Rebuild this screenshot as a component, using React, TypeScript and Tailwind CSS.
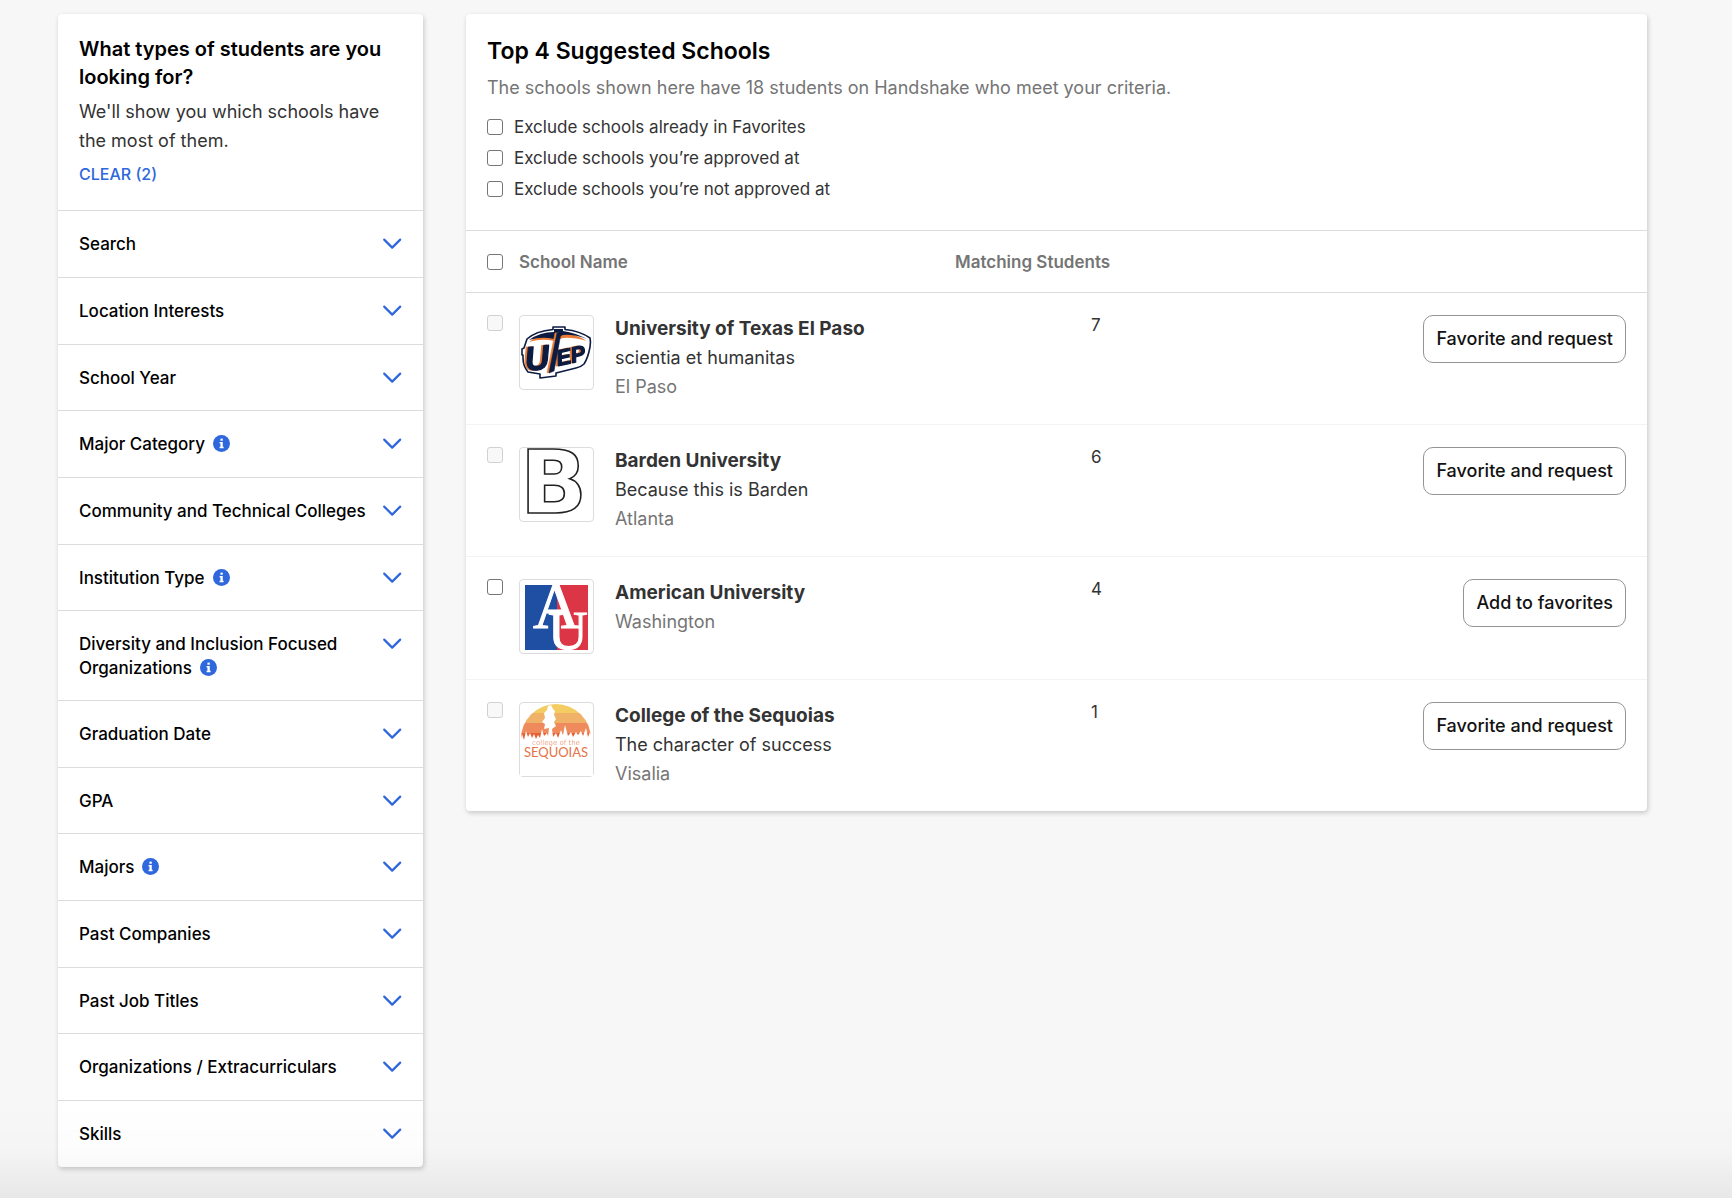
import { useState, type ReactNode } from 'react'

type Filter = { label: string; info?: boolean }

type School = {
  id: string
  name: string
  tagline?: string
  city: string
  matching: number
  action: string
  selectable: boolean
  logo: ReactNode
}

const FILTERS: Filter[] = [
  { label: 'Search' },
  { label: 'Location Interests' },
  { label: 'School Year' },
  { label: 'Major Category', info: true },
  { label: 'Community and Technical Colleges' },
  { label: 'Institution Type', info: true },
  { label: 'Diversity and Inclusion Focused Organizations', info: true },
  { label: 'Graduation Date' },
  { label: 'GPA' },
  { label: 'Majors', info: true },
  { label: 'Past Companies' },
  { label: 'Past Job Titles' },
  { label: 'Organizations / Extracurriculars' },
  { label: 'Skills' },
]

const EXCLUSIONS = [
  { id: 'exclude-favorites', label: 'Exclude schools already in Favorites' },
  { id: 'exclude-approved', label: 'Exclude schools you’re approved at' },
  { id: 'exclude-not-approved', label: 'Exclude schools you’re not approved at' },
]

const SCHOOLS: School[] = [
  {
    id: 'utep',
    name: 'University of Texas El Paso',
    tagline: 'scientia et humanitas',
    city: 'El Paso',
    matching: 7,
    action: 'Favorite and request',
    selectable: false,
    logo: <UtepLogo />,
  },
  {
    id: 'barden',
    name: 'Barden University',
    tagline: 'Because this is Barden',
    city: 'Atlanta',
    matching: 6,
    action: 'Favorite and request',
    selectable: false,
    logo: <BardenLogo />,
  },
  {
    id: 'american',
    name: 'American University',
    city: 'Washington',
    matching: 4,
    action: 'Add to favorites',
    selectable: true,
    logo: <AmericanLogo />,
  },
  {
    id: 'sequoias',
    name: 'College of the Sequoias',
    tagline: 'The character of success',
    city: 'Visalia',
    matching: 1,
    action: 'Favorite and request',
    selectable: false,
    logo: <SequoiasLogo />,
  },
]

const CHECKBOX =
  'block size-4 shrink-0 appearance-none rounded-[3px] border border-[#767676] bg-white checked:border-[#2f67dc] checked:bg-[#2f67dc] disabled:border-[#d1d1d1] disabled:bg-[#f8f8f8]'

const CARD = 'rounded-[4px] bg-white shadow-[1px_2px_5px_rgba(0,0,0,0.2)]'

export default function App() {
  return (
    <div className="min-h-screen bg-[#f7f7f7] font-['Inter','Liberation_Sans',sans-serif] text-[#333]">
      <div className="flex items-start gap-[43px] pt-[14px] pr-[85px] pb-[31px] pl-[58px]">
        <FilterSidebar />
        <SuggestedSchools />
      </div>
      {/* soft shade along the bottom edge of the window */}
      <div className="pointer-events-none fixed inset-x-0 bottom-0 h-24 bg-linear-to-b from-transparent via-black/1 to-black/6" />
    </div>
  )
}

function FilterSidebar() {
  return (
    <aside className={`w-[365px] shrink-0 ${CARD}`}>
      <div className="px-[21px] pt-[21px] pb-6">
        <h2 className="text-[20px] leading-7 font-semibold text-black">
          What types of students are you looking for?
        </h2>
        <p className="mt-[6px] text-[18px] leading-[29px]">
          We'll show you which schools have the most of them.
        </p>
        <button type="button" className="mt-2 block text-[16px] leading-[23px] font-medium text-[#2f67dc]">
          CLEAR (2)
        </button>
      </div>
      <ul>
        {FILTERS.map((f) => (
          <FilterRow key={f.label} filter={f} />
        ))}
      </ul>
    </aside>
  )
}

function FilterRow({ filter }: { filter: Filter }) {
  const [open, setOpen] = useState(false)
  return (
    <li className="min-h-[67px] border-t border-[#dcdcdc] nth-[3n]:min-h-[66px]">
      <button
        type="button"
        aria-expanded={open}
        onClick={() => setOpen(!open)}
        className="flex w-full items-start justify-between px-[21px] pt-[21px] pb-5 text-left text-[17px] leading-6 font-medium text-black"
      >
        <span>
          {filter.label}
          {filter.info && <InfoIcon />}
        </span>
        <svg viewBox="0 0 20 12" className="mt-[6px] h-3 w-5 shrink-0" aria-hidden="true">
          <path
            d="M2.2 1.6 10.2 9.6 18.2 1.6"
            fill="none"
            stroke="#2f67dc"
            strokeWidth="2.2"
            strokeLinecap="round"
            strokeLinejoin="round"
          />
        </svg>
      </button>
    </li>
  )
}

function InfoIcon() {
  return (
    <svg viewBox="0 0 16 16" className="ml-2 inline-block size-[17px] align-[-2px]" aria-hidden="true">
      <circle cx="8" cy="8" r="8" fill="#2f67dc" />
      <rect x="7" y="3.4" width="2.2" height="2" fill="#fff" />
      <path d="M6.2 6.6H9.2V11H10V12.4H6.2V11H7V8H6.2Z" fill="#fff" />
    </svg>
  )
}

function SuggestedSchools() {
  return (
    <main className={`min-w-0 flex-1 ${CARD}`}>
      <header className="px-[21px] pt-5 pb-[26px]">
        <h1 className="text-[23px] leading-[34px] font-semibold text-black">Top 4 Suggested Schools</h1>
        <p className="mt-[5px] text-[18px] leading-[29px] text-[#757575]">
          The schools shown here have 18 students on Handshake who meet your criteria.
        </p>
        <div className="mt-[9px] flex flex-col">
          {EXCLUSIONS.map((e) => (
            <div key={e.id} className="flex h-[31px] items-center gap-[11px]">
              <input type="checkbox" id={e.id} className={CHECKBOX} />
              <label htmlFor={e.id} className="text-[17px] leading-6">
                {e.label}
              </label>
            </div>
          ))}
        </div>
      </header>

      <table className="w-full table-fixed border-collapse text-left">
        <colgroup>
          <col className="w-[53px]" />
          <col className="w-[436px]" />
          <col className="w-[220px]" />
          <col />
        </colgroup>
        <thead>
          <tr className="h-[62px] border-y border-[#dcdcdc] text-[17px] leading-6 text-[#757575]">
            <th className="pl-[21px]">
              <input type="checkbox" aria-label="Select all schools" className={CHECKBOX} />
            </th>
            <th className="font-semibold">School Name</th>
            <th className="font-semibold">Matching Students</th>
            <td />
          </tr>
        </thead>
        <tbody>
          {SCHOOLS.map((s) => (
            <SchoolRow key={s.id} school={s} />
          ))}
        </tbody>
      </table>
    </main>
  )
}

function SchoolRow({ school }: { school: School }) {
  return (
    <tr className="border-b border-[#f3f3f3] align-top last:border-b-0">
      <td className="pt-[22px] pb-[23px] pl-[21px]">
        <input
          type="checkbox"
          aria-label={`Select ${school.name}`}
          disabled={!school.selectable}
          className={CHECKBOX}
        />
      </td>
      <td className="pt-[22px] pb-[23px]">
        <div className="flex gap-[21px]">
          <div className="mb-[2px] size-[75px] shrink-0 rounded-[4px] border border-[#dcdcdc]">
            {school.logo}
          </div>
          <div className="text-[18px] leading-[29px]">
            <div className="text-[19px] leading-7 font-bold">{school.name}</div>
            {school.tagline && <div>{school.tagline}</div>}
            <div className="text-[#757575]">{school.city}</div>
          </div>
        </div>
      </td>
      <td className="pt-[22px] pb-[23px] pl-[136px] text-[17px] leading-5">{school.matching}</td>
      <td className="pt-[22px] pr-[21px] pb-[23px] text-right">
        <button
          type="button"
          className="h-12 rounded-[10px] border border-[#949494] bg-white px-3 text-[18px] leading-6 font-medium text-[#121212]"
        >
          {school.action}
        </button>
      </td>
    </tr>
  )
}

function UtepLogo() {
  return (
    <svg viewBox="0 0 73 73" className="size-full overflow-visible" role="img" aria-label="UTEP logo">
      <path
        d="M4 32 7 23Q16 15 33 13.5V11H45V13.5Q60 15 70 22 71 26 70 31 68 42 64 48 61 51 56 52L36 57V60L20 62V58L8 56Q3 50 3 42V39H2V33Z"
        fill="#fff"
        stroke="#0b1b42"
        strokeWidth="1.6"
        strokeLinejoin="round"
      />
      <path d="M9 26Q20 17 34 17V13H43V17Q56 18 67 25 53 21 43 22L34 25Q22 22 9 26Z" fill="#e87b35" />
      <path d="M9 24Q20 16 34 16V13H43V15Q56 17 67 23 53 18 43 19L34 23Q22 20 9 24Z" fill="#0b1b42" />
      <g
        fontFamily="Liberation Sans, sans-serif"
        fontWeight="700"
        fontStyle="italic"
        fill="#0b1b42"
        stroke="#0b1b42"
        strokeWidth="1.2"
        strokeLinejoin="round"
        className="drop-shadow-[-2px_0_0_#e87b35]"
      >
        <text x="6" y="55" fontSize="34" transform="rotate(-6 6 55)">U</text>
        <text x="38" y="50" fontSize="22" transform="rotate(-12 38 50)">EP</text>
        <path d="M37 17H41L34 55 29 57Z" strokeWidth="0.6" />
      </g>
    </svg>
  )
}

function BardenLogo() {
  return (
    <svg viewBox="0 0 73 73" className="size-full overflow-visible" role="img" aria-label="Barden University logo">
      <text
        x="0"
        y="65"
        fontSize="88"
        fontFamily="DejaVu Sans, sans-serif"
        fontWeight="700"
        fill="none"
        stroke="#222"
        strokeWidth="1.6"
      >
        B
      </text>
    </svg>
  )
}

function AmericanLogo() {
  return (
    <svg viewBox="0 0 73 73" className="size-full overflow-visible" role="img" aria-label="American University logo">
      <rect x="5" y="5" width="32" height="65" fill="#1f4fa3" />
      <rect x="37" y="5" width="31" height="65" fill="#dc3545" />
      <g fill="#fff" stroke="#fff" fontFamily="Liberation Serif, serif">
        <text x="13" y="48" fontSize="65">A</text>
        <text x="28" y="69" fontSize="55">U</text>
      </g>
    </svg>
  )
}

function SequoiasLogo() {
  return (
    <svg viewBox="0 0 73 73" className="size-full overflow-visible" role="img" aria-label="College of the Sequoias logo">
      <clipPath id="sun">
        <circle cx="36" cy="36" r="35" />
      </clipPath>
      <g clipPath="url(#sun)">
        <rect width="73" height="10" fill="#f3cd62" />
        <rect y="10" width="73" height="10" fill="#f0b268" />
        <rect y="20" width="73" height="10" fill="#ee8a5c" />
        <rect y="30" width="73" height="10" fill="#e66234" />
      </g>
      <path
        d="M0 40 2 31 4 37 6 28 8 34 10 30 12 35 14 31 16 36 18 32 20 35 22 26 24 33 27 30 28 33 29 25 24 26 25 21 22 19 25 15 24 10 27 7 28 3 31 2 33 6 35 8 34 12 36 16 34 19 36 23 32 26 33 34 36 30 38 35 41 27 43 32 45 22 48 33 51 29 53 34 56 29 58 32 61 28 63 33 66 25 68 34 70 29 73 37V73H0Z"
        fill="#fff"
      />
      <g fill="#e57247" textAnchor="middle">
        <text x="36" y="42" fontSize="7" fontFamily="DejaVu Sans, sans-serif" opacity="0.6">
          college of the
        </text>
        <text x="36" y="54" fontSize="13" fontFamily="Lato, sans-serif">
          SEQUOIAS
        </text>
      </g>
    </svg>
  )
}
